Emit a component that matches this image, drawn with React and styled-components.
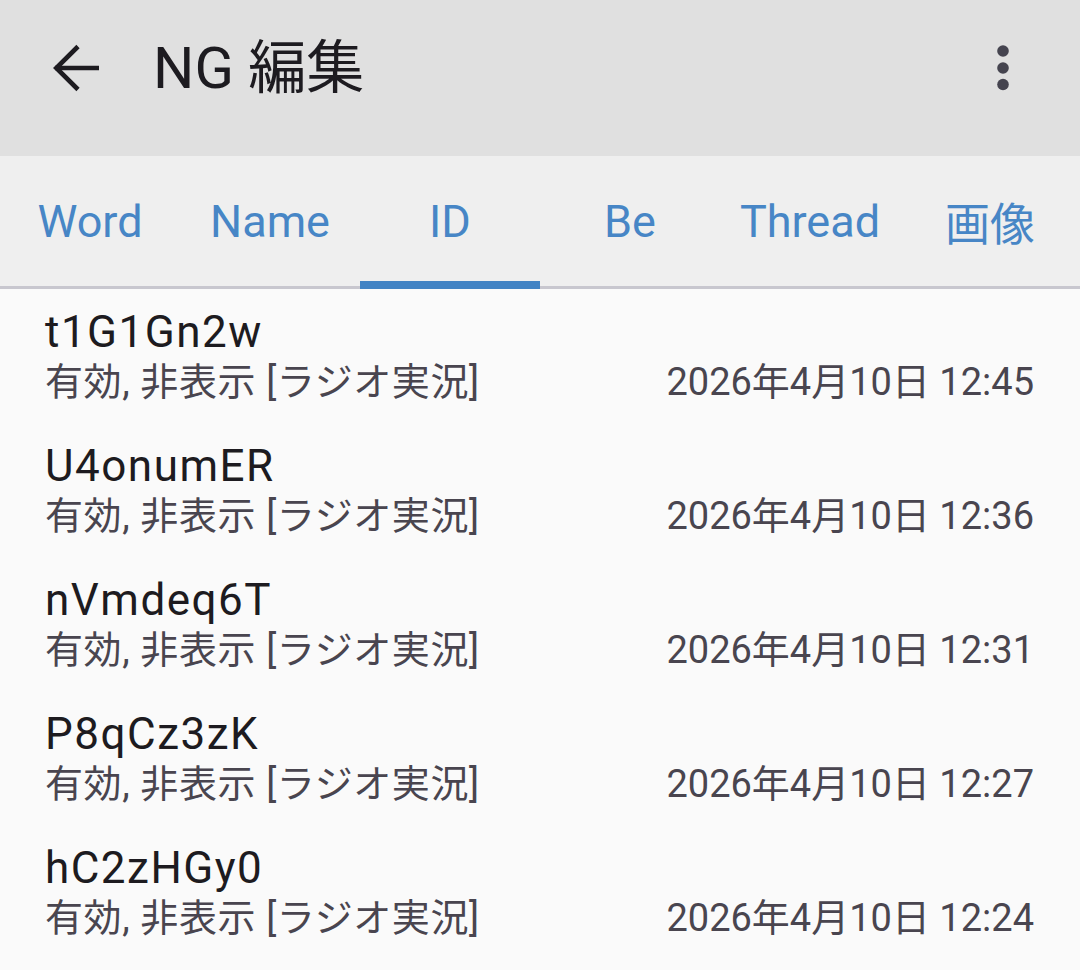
import React from "react";
import styled, { createGlobalStyle } from "styled-components";

const Global = createGlobalStyle`
  html, body { margin: 0; padding: 0; background: #fafafa; }
  body { font-family: Roboto, "Noto Sans CJK JP", sans-serif; }
  * { box-sizing: border-box; }
`;

const Page = styled.div`
  width: 1080px;
  height: 970px;
  overflow: hidden;
  background: #fafafa;
  display: flex;
  flex-direction: column;
`;

const AppBar = styled.header`
  height: 156px;
  flex: none;
  background: #e0e0e0;
  display: flex;
  align-items: center;
  padding: 0 71px 20px 50px;
`;

const IconButton = styled.div`
  width: ${(p) => p.$w}px;
  height: 60px;
  display: flex;
  align-items: center;
  justify-content: center;
  flex: none;
`;

const Title = styled.h1`
  margin: 0 0 0 53px;
  flex: 1;
  font-family: Roboto, "Noto Sans CJK JP", sans-serif;
  font-weight: 400;
  font-size: 58px;
  line-height: 1;
  color: #1d1b20;
`;

const TabBar = styled.nav`
  height: 133px;
  flex: none;
  background: #efefef;
  border-bottom: 3px solid #c8c7cf;
  display: grid;
  grid-template-columns: repeat(6, 180px);
`;

const Tab = styled.div`
  position: relative;
  display: flex;
  align-items: center;
  justify-content: center;
  font-family: Roboto, "Noto Sans CJK JP", sans-serif;
  font-size: 45px;
  color: #4786c6;
  &::after {
    content: "";
    display: ${(p) => (p.$active ? "block" : "none")};
    position: absolute;
    left: 0;
    right: 0;
    bottom: -3px;
    height: 8px;
    background: #4283c4;
  }
`;

const List = styled.ul`
  list-style: none;
  margin: 0;
  padding: 0;
`;

const Row = styled.li`
  height: 134px;
  padding: 18px 46px 16px 45px;
  display: flex;
  flex-direction: column;
`;

const ItemTitle = styled.div`
  height: 50px;
  line-height: 50px;
  font-size: 44px;
  letter-spacing: 1.5px;
  color: #1d1b20;
  font-family: Roboto, "Noto Sans CJK JP", sans-serif;
`;

const SubLine = styled.div`
  height: 50px;
  line-height: 50px;
  display: flex;
  justify-content: space-between;
  font-size: 38px;
  color: #49454f;
  font-family: Roboto, "Noto Sans CJK JP", sans-serif;
`;

const Status = styled.span`
  letter-spacing: 0.6px;
`;

const BackArrow = () => (
  <svg width="50" height="50" viewBox="0 0 50 50" fill="none">
    <path d="M49 25H5" stroke="#1d1b20" strokeWidth="4.6" />
    <path d="M28 3.5L6.3 25L28 46.5" stroke="#1d1b20" strokeWidth="4.6" />
  </svg>
);

const MoreDots = () => (
  <svg width="12" height="46" viewBox="0 0 12 46">
    <circle cx="6" cy="6" r="5.8" fill="#45444f" />
    <circle cx="6" cy="23" r="5.8" fill="#45444f" />
    <circle cx="6" cy="39.5" r="5.8" fill="#45444f" />
  </svg>
);

const tabs = ["Word", "Name", "ID", "Be", "Thread", "画像"];

const items = [
  ["t1G1Gn2w", "12:45"],
  ["U4onumER", "12:36"],
  ["nVmdeq6T", "12:31"],
  ["P8qCz3zK", "12:27"],
  ["hC2zHGy0", "12:24"],
];

export default function App() {
  return (
    <Page>
      <Global />
      <AppBar>
        <IconButton $w={50}>
          <BackArrow />
        </IconButton>
        <Title>NG 編集</Title>
        <IconButton $w={12}>
          <MoreDots />
        </IconButton>
      </AppBar>
      <TabBar>
        {tabs.map((t) => (
          <Tab key={t} $active={t === "ID"}>
            {t}
          </Tab>
        ))}
      </TabBar>
      <List>
        {items.map(([id, time]) => (
          <Row key={id}>
            <ItemTitle>{id}</ItemTitle>
            <SubLine>
              <Status>有効, 非表示 [ラジオ実況]</Status>
              <span>2026年4月10日 {time}</span>
            </SubLine>
          </Row>
        ))}
      </List>
    </Page>
  );
}
